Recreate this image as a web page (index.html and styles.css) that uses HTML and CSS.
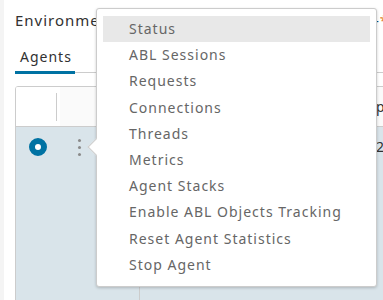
FILE: index.html
```html
<!DOCTYPE html>
<html lang="en">
    <head>
        <meta charset="UTF-8">
        <meta name="viewport" content="width=device-width, initial-scale=1.0">
        <title>Agents</title>
        <link rel="stylesheet" href="styles.css">
    </head>
    <body>
        <div class="pagina">
            <aside class="faixa"></aside>

            <main class="conteudo">
                <header class="titulo">
                    <span class="titulo-texto">Environment</span>
                    <span class="titulo-extra">-<b>*</b></span>
                </header>

                <nav class="abas">
                    <a class="aba ativa">Agents</a>
                </nav>

                <section class="tabela">
                    <div class="linha cabecalho">
                        <div class="celula sel"><span class="divisor"></span></div>
                        <div class="celula acoes"></div>
                        <div class="celula dados">p</div>
                    </div>
                    <div class="linha corpo">
                        <div class="celula sel"><span class="radio"></span></div>
                        <div class="celula acoes">
                            <span class="pontos"><i></i><i></i><i></i></span>
                        </div>
                        <div class="celula dados">2</div>
                    </div>
                </section>
            </main>
        </div>

        <div class="menu">
            <span class="seta"></span>
            <a class="item ativo">Status</a>
            <a class="item">ABL Sessions</a>
            <a class="item">Requests</a>
            <a class="item">Connections</a>
            <a class="item">Threads</a>
            <a class="item">Metrics</a>
            <a class="item">Agent Stacks</a>
            <a class="item">Enable ABL Objects Tracking</a>
            <a class="item">Reset Agent Statistics</a>
            <a class="item">Stop Agent</a>
        </div>
    </body>
</html>
```

FILE: styles.css
```css
* {
    padding: 0px;
    margin: 0px;
    box-sizing: border-box;
    font-family: "Noto Sans", sans-serif;
    letter-spacing: 1px;
}

body {
    background-color: #ffffff;
    width: 383px;
    height: 300px;
    overflow: hidden;
}

.pagina {
    display: flex;
    height: 300px;
}

.faixa {
    width: 4px;
    background-color: #f4f4f4;
    flex-shrink: 0;
}

.conteudo {
    flex: 1;
    padding-left: 11px;
    padding-top: 8px;
    overflow: hidden;
}

.titulo {
    display: flex;
    height: 24px;
    align-items: center;
    font-size: 15px;
    color: #313131;
}

.titulo-extra {
    margin-left: auto;
    margin-right: -6px;
    color: #0f4c6e;
}

.titulo-extra b {
    color: #e07b28;
    font-weight: normal;
}

.abas {
    margin-top: 13px;
    border-bottom: 1px solid #cccccc;
    height: 28px;
    margin-right: -20px;
}

.aba {
    display: inline-block;
    height: 27px;
    padding: 0 3px 0 5px;
    font-size: 14px;
    color: #313131;
    border-bottom: 3px solid #0072a3;
    line-height: 20px;
}

.tabela {
    margin-top: 13px;
    border: 1px solid #cccccc;
    border-radius: 3px;
    margin-right: -20px;
    height: 230px;
    overflow: hidden;
}

.linha {
    display: flex;
}

.cabecalho {
    height: 40px;
    border-bottom: 1px solid #cccccc;
    background-color: #fafafa;
}

.corpo {
    background-color: #d9e4ea;
    height: 200px;
}

.celula {
    font-size: 14px;
    color: #313131;
}

.sel {
    width: 44px;
    display: flex;
    justify-content: center;
    position: relative;
}

.cabecalho .sel {
    background-color: #ffffff;
}

.divisor {
    position: absolute;
    right: 3px;
    top: 6px;
    width: 1px;
    height: 28px;
    background-color: #cccccc;
}

.acoes {
    width: 80px;
    border-right: 1px solid #cccccc;
    padding-left: 18px;
}

.cabecalho .acoes {
    border-right: none;
}

.dados {
    flex: 1;
    padding-left: 236px;
    line-height: 40px;
}

.radio {
    display: block;
    margin-top: 11px;
    width: 18px;
    height: 18px;
    border-radius: 50%;
    border: 6.5px solid #0072a3;
    background-color: #ffffff;
}

.pontos {
    margin-top: 12px;
    display: flex;
    flex-direction: column;
    gap: 4px;
}

.pontos i {
    display: block;
    width: 3px;
    height: 3px;
    border-radius: 50%;
    background-color: #8a8a8a;
}

.menu {
    position: absolute;
    left: 96px;
    top: 8px;
    width: 281px;
    height: 279px;
    padding: 7px 6px 8px 6px;
    background-color: #ffffff;
    border: 1px solid #cccccc;
    border-radius: 3px;
    box-shadow: 0 1px 3px rgba(0, 0, 0, 0.2);
}

.seta {
    position: absolute;
    left: -7px;
    top: 132px;
    width: 12px;
    height: 12px;
    background-color: #ffffff;
    border-left: 1px solid #cccccc;
    border-bottom: 1px solid #cccccc;
    transform: rotate(45deg);
}

.item {
    display: block;
    height: 26.2px;
    line-height: 26px;
    padding-left: 26px;
    font-size: 14px;
    color: #666666;
}

.item.ativo {
    background-color: #e8e8e8;
}
```
